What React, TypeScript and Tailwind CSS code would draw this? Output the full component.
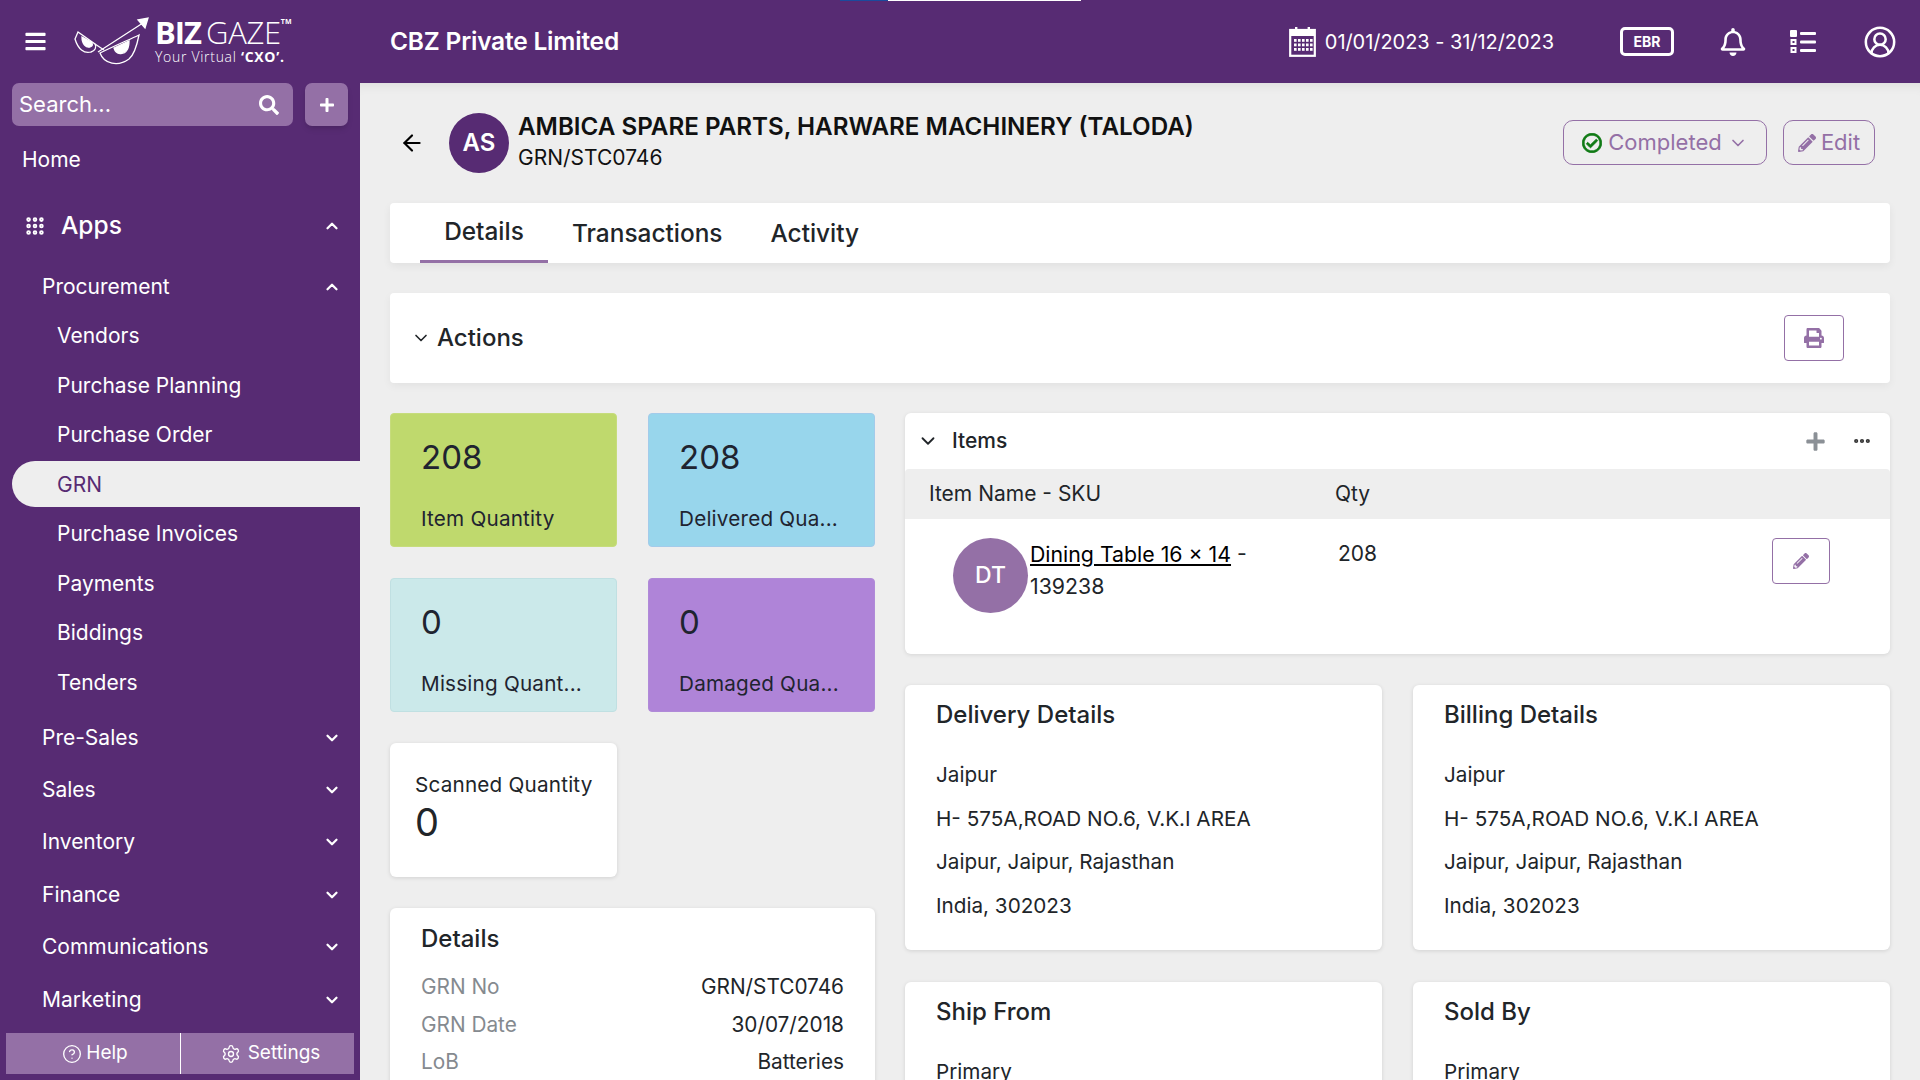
import React from "react";
import { ChevronDown, ChevronUp, ArrowLeft, MoreHorizontal, CircleHelp, Settings, CircleUserRound, Grip } from "lucide-react";
import { FaPencilAlt, FaRegCheckCircle, FaPrint, FaPlus, FaSearch, FaBars, FaRegBell } from "react-icons/fa";

const font = { fontFamily: "Inter, 'Liberation Sans', sans-serif" };

function Logo() {
  return (
    <div className="flex items-center ml-[2px]">
      <svg width="76" height="50" viewBox="0 0 76 50" fill="none" stroke="white" strokeWidth="1.3">
        <path d="M1 22 C4 32 10 37 17 35 C21 34 23 30 21 27 L4 15 Z" />
        <path d="M8 20 C8 27 12 31 16 30 C19 29 19 27 17 25 Z" fill="white" />
        <path d="M26 36 C30 47 44 50 55 42 C60 38 63 28 65 18 C52 24 38 30 26 36 Z" />
        <path d="M40 31 C42 38 50 38 53 33 C55 30 55 27 55 24 Z" fill="white" />
        <path d="M21 27 L30 33 M24 35 L72 4" />
        <path d="M64 3 L74 1 L71 11 Z" fill="white" />
      </svg>
      <div className="flex flex-col ml-[5px] leading-none text-white" style={{ fontFamily: "'Open Sans', sans-serif" }}>
        <div className="flex items-start h-[29px] text-[31px] leading-[29px]">
          <span className="font-bold tracking-[-1px]">BIZ</span>
          <span className="font-light ml-[5px] tracking-[-0.3px]">GAZE</span>
          <span className="text-[7px] leading-[8px] font-bold">TM</span>
        </div>
        <div className="text-[14px] leading-[16px] mt-[2px] tracking-[0.7px] font-light">
          Your Virtual <span className="font-bold">‘CXO’.</span>
        </div>
      </div>
    </div>
  );
}

function CalendarIcon() {
  return (
    <svg width="27" height="31" viewBox="0 0 27 31" fill="none">
      <rect x="1.2" y="4" width="24.6" height="25.8" stroke="white" strokeWidth="2.2" />
      <rect x="1" y="4" width="25" height="6" fill="white" />
      <rect x="6" y="1" width="2.4" height="5" fill="white" />
      <rect x="18.6" y="1" width="2.4" height="5" fill="white" />
      {[13, 17.5, 22].map((y) =>
        [5, 9, 13, 17, 21].map((x) => <rect key={`${x}-${y}`} x={x} y={y} width="2.6" height="2.8" fill="white" />)
      )}
    </svg>
  );
}

function Header() {
  return (
    <header className="h-[83px] shrink-0 bg-[#572b73] flex items-center text-white relative">
      <div className="absolute top-0 left-[840px] w-[48px] h-[1px] bg-[#1b4a9c]" />
      <div className="absolute top-0 left-[888px] w-[193px] h-[1px] bg-white" />
      <div className="w-[390px] shrink-0 flex items-center pl-[24px]">
        <FaBars className="text-[23px] mr-[25px]" />
        <Logo />
      </div>
      <div className="text-[24.5px] font-semibold tracking-[-0.2px]">CBZ Private Limited</div>
      <div className="ml-auto flex items-center">
        <CalendarIcon />
        <span className="ml-[9px] text-[20px] tracking-[-0.05px]">01/01/2023 - 31/12/2023</span>
        <span className="ml-[66px] w-[54px] h-[29px] border-[3px] border-white rounded-[5px] text-[14px] font-bold flex items-center justify-center">EBR</span>
        <FaRegBell className="ml-[45px] text-[28px]" />
        <svg className="ml-[42px]" width="28" height="28" viewBox="0 0 28 28" fill="white">
          <rect x="1" y="2" width="7" height="7" rx="1" />
          <rect x="2.5" y="12" width="4" height="4" fill="none" stroke="white" strokeWidth="2" />
          <rect x="2.5" y="20" width="4" height="4" fill="none" stroke="white" strokeWidth="2" />
          <rect x="11" y="4" width="16" height="3" rx="1" />
          <rect x="11" y="12.5" width="16" height="3" rx="1" />
          <rect x="11" y="21" width="16" height="3" rx="1" />
        </svg>
        <CircleUserRound className="ml-[46px] mr-[23px] w-[34px] h-[34px]" strokeWidth={1.8} />
      </div>
    </header>
  );
}

function NavRow({ label, cls, up }: { label: string; cls: string; up?: boolean }) {
  return (
    <div className={`flex items-center justify-between pl-[42px] pr-[19px] ${cls}`}>
      <span className="text-[21px] leading-[28px]">{label}</span>
      {up ? <ChevronUp className="w-[18px] h-[18px]" strokeWidth={3} /> : <ChevronDown className="w-[18px] h-[18px]" strokeWidth={3} />}
    </div>
  );
}

function Sidebar() {
  const subs = ["Vendors", "Purchase Planning", "Purchase Order", "GRN", "Purchase Invoices", "Payments", "Biddings", "Tenders"];
  const groups = ["Pre-Sales", "Sales", "Inventory", "Finance", "Communications", "Marketing"];
  return (
    <aside className="w-[360px] shrink-0 bg-[#572b73] text-white flex flex-col h-full">
      <div className="flex pl-[12px] pr-[12px] gap-[12px]">
        <div className="w-[281px] h-[43px] rounded-[7px] bg-[#9470a6] flex items-center justify-between pl-[7px] pr-[14px]">
          <span className="text-[22px]">Search...</span>
          <FaSearch className="text-[20px]" />
        </div>
        <div className="w-[43px] h-[43px] rounded-[7px] bg-[#9470a6] flex items-center justify-center shadow-md">
          <FaPlus className="text-[16px]" />
        </div>
      </div>
      <div className="pl-[22px] mt-[19.5px] text-[21px] leading-[28px]">Home</div>
      <div className="flex items-center justify-between pl-[24px] pr-[19px] mt-[32px] h-[40px]">
        <div className="flex items-center">
          <Grip className="w-[22px] h-[22px]" strokeWidth={3} />
          <span className="ml-[15px] text-[24.5px] font-medium">Apps</span>
        </div>
        <ChevronUp className="w-[18px] h-[18px]" strokeWidth={3} />
      </div>
      <NavRow label="Procurement" cls="mt-[27px] h-[28px]" up />
      <div className="flex flex-col mt-[10.5px]">
        {subs.map((s) =>
          s === "GRN" ? (
            <div key={s} className="ml-[12px] h-[46px] my-[1.75px] rounded-l-full bg-[#eeeeee] text-[#572b73] flex items-center pl-[45px] text-[21px]">
              {s}
            </div>
          ) : (
            <div key={s} className="h-[49.5px] flex items-center pl-[57px] text-[21px]">
              {s}
            </div>
          )
        )}
      </div>
      <div className="flex flex-col mt-[4.5px]">
        {groups.map((g) => (
          <NavRow key={g} label={g} cls="h-[52.4px]" />
        ))}
      </div>
      <div className="mt-auto mb-[6px] mx-[6px] h-[41px] shrink-0 bg-[#9470a6] flex text-[19px]">
        <div className="w-[175px] flex items-center justify-center gap-[4px] border-r border-white pl-[4px]">
          <CircleHelp className="w-[20px] h-[20px]" strokeWidth={1.6} />
          Help
        </div>
        <div className="flex-1 flex items-center justify-center gap-[7px] pl-[6px]">
          <Settings className="w-[20px] h-[20px]" strokeWidth={1.6} />
          Settings
        </div>
      </div>
    </aside>
  );
}

function Stat({ value, label, cls }: { value: string; label: string; cls: string }) {
  return (
    <div className={`h-[134px] rounded-[4px] pl-[30px] pt-[21px] text-[#1f2430] border ${cls}`}>
      <div className="text-[33px] leading-[44px]">{value}</div>
      <div className="mt-[26px] text-[20.7px] leading-[28px] tracking-[0.2px]">{label}</div>
    </div>
  );
}

function AddressCard({ title, lines, cls }: { title: string; lines: string[]; cls?: string }) {
  return (
    <div className={`bg-white rounded-[6px] shadow-[0_1px_4px_rgba(0,0,0,0.12)] pl-[31px] pt-[14px] ${cls ?? ""}`}>
      <div className="text-[24px] font-medium leading-[32px] text-[#212529]">{title}</div>
      <div className="mt-[30px] flex flex-col gap-[15.6px]">
        {lines.map((l) => (
          <div key={l} className="text-[20.7px] leading-[28px] text-[#212529]">{l}</div>
        ))}
      </div>
    </div>
  );
}

function Row({ k, v }: { k: string; v: string }) {
  return (
    <div className="flex justify-between text-[20.8px] h-[37.5px] items-center">
      <span className="text-[#858a8f]">{k}</span>
      <span className="text-[#212529]">{v}</span>
    </div>
  );
}

export default function App() {
  const addr = ["Jaipur", "H- 575A,ROAD NO.6, V.K.I AREA", "Jaipur, Jaipur, Rajasthan", "India, 302023"];
  return (
    <div className="h-screen w-full overflow-hidden flex flex-col" style={font}>
      <Header />
      <div className="flex flex-1 min-h-0">
        <Sidebar />
        <main className="flex-1 min-w-0 bg-[#eeeeee] pl-[30px] pr-[30px] overflow-hidden shadow-[inset_0_12px_12px_-10px_rgba(0,0,0,0.08)]">
          <div className="h-[120px] flex items-center">
            <ArrowLeft className="w-[26px] h-[26px] ml-[9px] text-black" strokeWidth={2} />
            <div className="ml-[24px] w-[60px] h-[60px] rounded-full bg-[#572b73] text-white flex items-center justify-center text-[24px] font-semibold">AS</div>
            <div className="ml-[9px] -mt-[3px]">
              <div className="text-[24.2px] leading-[32px] font-semibold text-[#111]">AMBICA SPARE PARTS, HARWARE MACHINERY (TALODA)</div>
              <div className="text-[21px] leading-[30px] text-[#111]">GRN/STC0746</div>
            </div>
            <div className="ml-auto mr-[15px] -mt-[1px] flex gap-[16px] text-[22px] text-[#9470a6]">
              <div className="w-[204px] h-[45px] rounded-[10px] border border-[#9470a6] flex items-center justify-center gap-[6px]">
                <FaRegCheckCircle className="text-[20px] text-[#0f7a14] stroke-[20]" />
                Completed
                <ChevronDown className="w-[20px] h-[20px]" strokeWidth={2} />
              </div>
              <div className="w-[92px] h-[45px] rounded-[10px] border border-[#9470a6] flex items-center justify-center gap-[5px]">
                <FaPencilAlt className="text-[18px]" />
                Edit
              </div>
            </div>
          </div>
          <div className="h-[60px] bg-white rounded-[4px] shadow-[0_3px_8px_rgba(0,0,0,0.06)] flex pl-[30px] text-[24.4px] font-medium text-[#212529]">
            <div className="w-[128px] flex items-center justify-center border-b-[3px] border-[#9470a6] mr-[24px]">Details</div>
            <div className="flex items-center mr-[48px]">Transactions</div>
            <div className="flex items-center">Activity</div>
          </div>
          <div className="mt-[30px] h-[90px] bg-white rounded-[4px] shadow-[0_3px_8px_rgba(0,0,0,0.05)] flex items-center pl-[21px] pr-[46px] justify-between">
            <div className="flex items-center gap-[6px] text-[24px] font-medium text-[#212529]">
              <ChevronDown className="w-[20px] h-[20px]" strokeWidth={2} />
              Actions
            </div>
            <div className="w-[60px] h-[46px] rounded-[4px] border border-[#9470a6] text-[#9470a6] flex items-center justify-center">
              <FaPrint className="text-[20px]" />
            </div>
          </div>
          <div className="mt-[30px] flex gap-[30px]">
            <div className="w-[485px] shrink-0 flex flex-col">
              <div className="grid grid-cols-2 gap-x-[31px] gap-y-[31px]">
                <Stat value="208" label="Item Quantity" cls="bg-[#bfd96d] border-[#c6dc7c]" />
                <Stat value="208" label="Delivered Qua..." cls="bg-[#98d6ec] border-[#a3cbea]" />
                <Stat value="0" label="Missing Quant..." cls="bg-[#cbe9ea] border-[#c0e0e2]" />
                <Stat value="0" label="Damaged Qua..." cls="bg-[#af84d8] border-[#b08ad8]" />
              </div>
              <div className="mt-[31px] w-[227px] h-[134px] bg-white rounded-[6px] shadow-[0_1px_4px_rgba(0,0,0,0.12)] pl-[25px] pt-[28px]">
                <div className="text-[20.7px] leading-[28px] text-[#212529] tracking-[0.2px]">Scanned Quantity</div>
                <div className="text-[38px] leading-[46px] text-[#212529]">0</div>
              </div>
              <div className="mt-[31px] h-[300px] bg-white rounded-[6px] shadow-[0_1px_4px_rgba(0,0,0,0.12)] px-[31px] pt-[15px]">
                <div className="text-[24px] font-medium leading-[32px] text-[#212529]">Details</div>
                <div className="mt-[13px]">
                  <Row k="GRN No" v="GRN/STC0746" />
                  <Row k="GRN Date" v="30/07/2018" />
                  <Row k="LoB" v="Batteries" />
                </div>
              </div>
            </div>
            <div className="flex-1 min-w-0 flex flex-col">
              <div className="h-[241px] bg-white rounded-[6px] shadow-[0_1px_4px_rgba(0,0,0,0.1)]">
                <div className="h-[56px] flex items-center justify-between pl-[12px] pr-[18px]">
                  <div className="flex items-center gap-[13px] text-[21px] font-medium text-[#212529]">
                    <ChevronDown className="w-[22px] h-[22px]" strokeWidth={2} />
                    Items
                  </div>
                  <div className="flex items-center gap-[26px] text-[#8b9096]">
                    <FaPlus className="text-[21px]" />
                    <MoreHorizontal className="w-[20px] h-[20px] text-[#333]" strokeWidth={3} />
                  </div>
                </div>
                <div className="h-[50px] bg-[#eeeeee] rounded-t-[4px] flex items-center text-[21px] text-[#212529]">
                  <span className="ml-[24px] w-[406px]">Item Name - SKU</span>
                  <span>Qty</span>
                </div>
                <div className="flex pt-[19px]">
                  <div className="ml-[48px] w-[75px] h-[75px] rounded-full bg-[#9470a6] text-white flex items-center justify-center text-[23px] font-medium shrink-0">DT</div>
                  <div className="ml-[2px] w-[240px] text-[21.3px] leading-[32px] text-[#212529]">
                    <span className="underline text-black">Dining Table 16 × 14</span> - 139238
                  </div>
                  <div className="ml-[68px] text-[21px] leading-[32px] text-[#212529]">208</div>
                  <div className="ml-auto mr-[60px] w-[58px] h-[46px] rounded-[4px] border border-[#9470a6] text-[#9470a6] flex items-center justify-center">
                    <FaPencilAlt className="text-[16px]" />
                  </div>
                </div>
              </div>
              <div className="mt-[31px] grid grid-cols-2 gap-x-[31px] gap-y-[32px]">
                <AddressCard title="Delivery Details" lines={addr} cls="h-[265px]" />
                <AddressCard title="Billing Details" lines={addr} cls="h-[265px]" />
                <AddressCard title="Ship From" lines={["Primary"]} cls="h-[265px]" />
                <AddressCard title="Sold By" lines={["Primary"]} cls="h-[265px]" />
              </div>
            </div>
          </div>
        </main>
      </div>
    </div>
  );
}
